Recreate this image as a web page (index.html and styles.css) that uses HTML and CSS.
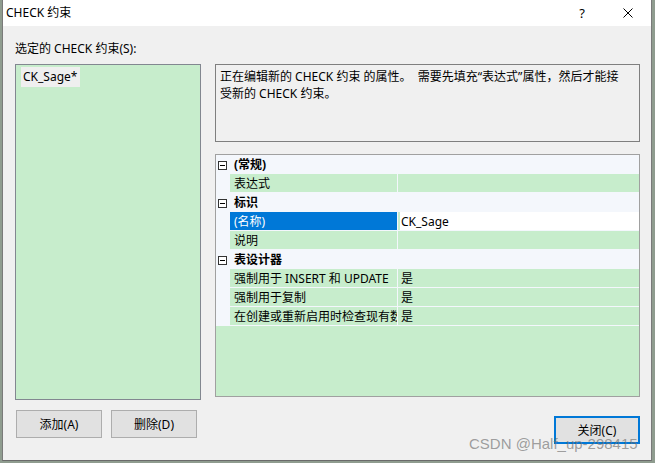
FILE: index.html
```html
<!DOCTYPE html>
<html lang="zh-CN">
<head>
<meta charset="utf-8">
<title>CHECK 约束</title>
<link rel="stylesheet" href="styles.css">
</head>
<body>
<div class="dialog">
  <div class="titlebar">
    <span class="title">CHECK 约束</span>
    <span class="cap-btn cap-help">?</span>
    <span class="cap-btn cap-close"><svg width="10" height="10" viewBox="0 0 10 10"><path d="M0.5 0.5L9.5 9.5M9.5 0.5L0.5 9.5" stroke="#000" stroke-width="1" fill="none"/></svg></span>
  </div>
  <div class="content">
    <div class="label">选定的 CHECK 约束(S):</div>
    <div class="columns">
      <div class="left">
        <div class="listbox"><span class="list-item">CK_Sage*</span></div>
        <div class="btn-row">
          <button class="btn">添加(A)</button>
          <button class="btn">删除(D)</button>
        </div>
      </div>
      <div class="right">
        <div class="desc">正在编辑新的 CHECK 约束 的属性。&nbsp; 需要先填充“表达式”属性，然后才能接<br>受新的 CHECK 约束。</div>
        <div class="grid">
          <div class="row cat"><span class="gutter"><svg width="9" height="9" viewBox="0 0 9 9"><rect x="0.5" y="0.5" width="8" height="8" fill="#fff" stroke="#333"/><path d="M2 4.5H7" stroke="#000"/></svg></span><span class="cat-name">(常规)</span></div>
          <div class="row"><span class="gutter"></span><span class="name">表达式</span><span class="sep"></span><span class="value"></span></div>
          <div class="row cat"><span class="gutter"><svg width="9" height="9" viewBox="0 0 9 9"><rect x="0.5" y="0.5" width="8" height="8" fill="#fff" stroke="#333"/><path d="M2 4.5H7" stroke="#000"/></svg></span><span class="cat-name">标识</span></div>
          <div class="row selected"><span class="gutter"></span><span class="name">(名称)</span><span class="sep"></span><span class="value">CK_Sage</span></div>
          <div class="row"><span class="gutter"></span><span class="name">说明</span><span class="sep"></span><span class="value"></span></div>
          <div class="row cat"><span class="gutter"><svg width="9" height="9" viewBox="0 0 9 9"><rect x="0.5" y="0.5" width="8" height="8" fill="#fff" stroke="#333"/><path d="M2 4.5H7" stroke="#000"/></svg></span><span class="cat-name">表设计器</span></div>
          <div class="row"><span class="gutter"></span><span class="name">强制用于 INSERT 和 UPDATE</span><span class="sep"></span><span class="value">是</span></div>
          <div class="row"><span class="gutter"></span><span class="name">强制用于复制</span><span class="sep"></span><span class="value">是</span></div>
          <div class="row"><span class="gutter"></span><span class="name">在创建或重新启用时检查现有数据</span><span class="sep"></span><span class="value">是</span></div>
        </div>
        <div class="close-row"><button class="btn btn-default">关闭(C)</button></div>
      </div>
    </div>
  </div>
  <div class="watermark">CSDN @Half_up-298415</div>
</div>
</body>
</html>
```

FILE: styles.css
```css
* { box-sizing: border-box; }
html, body { margin: 0; padding: 0; }
body {
  width: 655px;
  height: 463px;
  overflow: hidden;
  background: #8f9c8f;
  font-family: "Noto Sans", "Noto Sans CJK SC", sans-serif;
  font-size: 12px;
  color: #000;
}
.dialog {
  position: relative;
  margin-left: 2px;
  width: 650px;
  height: 461px;
  background: #f0f0f0;
  border-left: 1px solid #7a7a7a;
  border-right: 1px solid #7a7a7a;
  border-bottom: 1px solid #6a6a6a;
  display: flex;
  flex-direction: column;
}
.titlebar {
  height: 26px;
  background: #fff;
  display: flex;
  align-items: center;
}
.title {
  padding-left: 3px;
  line-height: 16px;
}
.cap-btn {
  width: 46px;
  height: 26px;
  display: flex;
  align-items: center;
  justify-content: center;
}
.cap-help { margin-left: auto; font-size: 13px; }
.content {
  padding: 15px 11px 0 12px;
}
.label {
  line-height: 16px;
  margin-bottom: 7px;
}
.columns {
  display: flex;
  gap: 14px;
}
.left { width: 186px; }
.right { flex: 1; display: flex; flex-direction: column; }
.listbox {
  height: 336px;
  border: 1px solid #828790;
  background: #c7edcc;
}
.list-item {
  display: inline-block;
  margin: 2px 0 0 5px;
  padding: 0 3px 0 2px;
  height: 20px;
  line-height: 20px;
  background: #efefef;
}
.btn-row {
  display: flex;
  gap: 9px;
  margin-top: 10px;
  padding-left: 1px;
}
.btn {
  width: 86px;
  height: 28px;
  background: #e1e1e1;
  border: 1px solid #adadad;
  font-family: inherit;
  font-size: 12px;
  color: #000;
  padding: 0;
}
.btn-default { border: 2px solid #0078d7; }
.desc {
  height: 78px;
  border: 1px solid #7f7f7f;
  background: #f0f0f0;
  padding: 3px 4px;
  line-height: 17px;
}
.grid {
  margin-top: 12px;
  height: 243px;
  border: 1px solid #a0a0a0;
  background: #c7edcc;
}
.row {
  display: flex;
  height: 19px;
  border-bottom: 1px solid #f4f7fc;
  line-height: 20px;
}
.gutter {
  width: 14px;
  background: #f4f7fc;
  display: flex;
  align-items: center;
  padding-left: 2px;
  padding-top: 2px;
}
.cat { background: #f4f7fc; }
.cat-name {
  padding-left: 4px;
  font-weight: bold;
}
.name {
  width: 167px;
  padding-left: 4px;
  white-space: nowrap;
  overflow: hidden;
}
.sep { width: 1px; background: #f4f7fc; }
.value {
  flex: 1;
  padding-left: 3px;
}
.selected .name { background: #0078d7; color: #fff; }
.selected .value {
  background: #fff;
  border-left: 2px solid #c7edcc;
  padding-left: 1px;
}
.close-row {
  margin-top: 19px;
  display: flex;
  justify-content: flex-end;
}
.watermark {
  position: absolute;
  left: 466px;
  top: 435px;
  font-family: "Liberation Sans", Arial, sans-serif;
  font-size: 15px;
  line-height: 17px;
  color: rgba(110, 110, 110, 0.65);
  white-space: nowrap;
}
```
